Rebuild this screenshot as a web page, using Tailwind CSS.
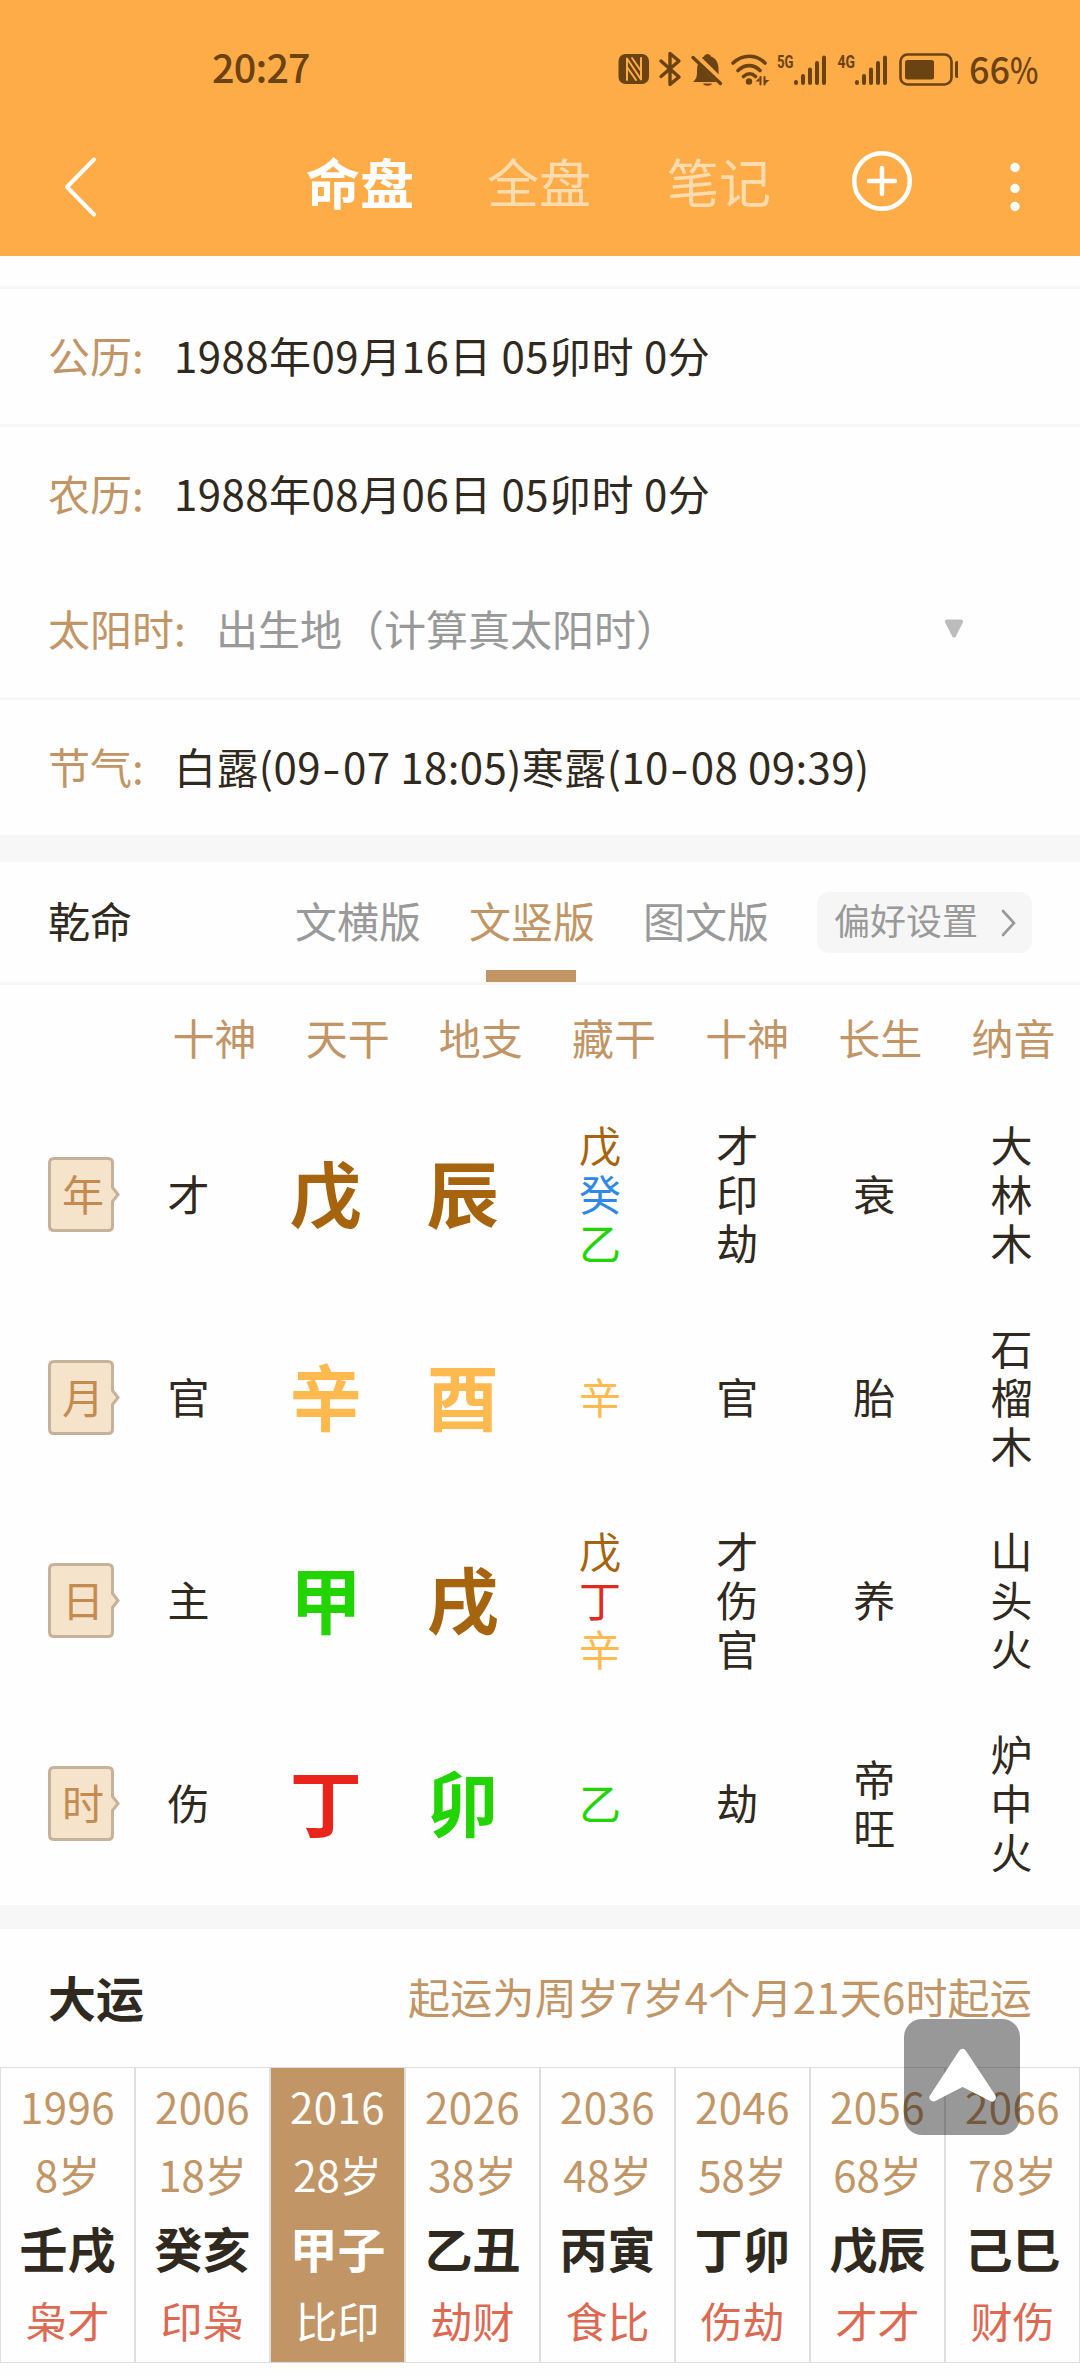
<!DOCTYPE html>
<html lang="zh-CN">
<head>
<meta charset="utf-8">
<title>命盘</title>
<script src="https://cdn.jsdelivr.net/npm/@tailwindcss/browser@4"></script>
</head>
<body class="relative w-[1080px] h-[2376px] overflow-hidden bg-[#fefefe] text-[42px] text-[#302920] whitespace-nowrap font-['Noto_Sans_CJK_SC',sans-serif]">

<header class="h-[256px] bg-[#feac48]">
  <!-- status bar -->
  <div class="flex items-center h-[112px] pt-[25px] pl-[212px] text-[#6b4312]">
    <span class="w-[406px] shrink-0 pb-[5px] text-[39.500px] leading-none font-medium tracking-[-0.8px]">20:27</span>
    <svg class="w-[340px] h-[40px] shrink-0" viewBox="618 48 340 40" fill="none" stroke="currentColor" stroke-linecap="round" stroke-linejoin="round">
      <rect x="618.500" y="53" width="30.500" height="30" rx="7" fill="currentColor" stroke="none"/>
      <path d="M627 79V57.500L641 78.500V57M627 66l9 13M632 57l9 13" stroke="#feac48" stroke-width="2"/>
      <path d="M661 60l18 16-9 7.500V52.500l9 7.500-18 15.500" stroke-width="3.400"/>
      <path d="M693 81c3-2.500 4-5 4-10 0-8 2-13 7-15.500 1-3.500 6-3.500 7 0 6 2 8 8 7.500 15.500 0 5 1.500 7.500 3.500 10zM703 82.500h9c-1 3-8 3-9 0z" fill="currentColor" stroke="none"/>
      <path d="M694.500 54.500l28 27.500" stroke="#feac48" stroke-width="7" stroke-linecap="butt"/>
      <path d="M693 56.500l27.500 26" stroke-width="3.400"/>
      <path d="M733 62c10-9 23-9 32 0M738 69.500c7-6.500 15.500-6.500 22 0M743.500 75.500c4-3.500 8.500-3.500 12 0" stroke-width="3.600"/>
      <circle cx="749" cy="80.500" r="3.200" fill="currentColor" stroke="none"/>
      <path d="M760.500 76v7.500M764.500 76v7.500" stroke-width="2"/>
      <path d="M755.500 80.500l4-4v4zM769.500 79l-4.500 4v-4z" fill="currentColor" stroke="none"/>
      <path d="M796 81v1M803 75v7M810 68.500V82M817 62v20M824 56.500V82M857 81v1M864 75v7M871 68.500V82M878 62v20M885 56.500V82" stroke-width="4"/>
      <rect x="900.500" y="53.500" width="51" height="30" rx="7" stroke-width="2.600"/>
      <rect x="905" y="59" width="29" height="19.500" rx="2.500" fill="currentColor" stroke="none"/>
      <path d="M957 62v13" stroke-width="4"/>
      <g fill="currentColor" stroke="none" font-family="Roboto" font-weight="700" font-size="18"><text x="777" y="66.500" textLength="16.500" lengthAdjust="spacingAndGlyphs">5G</text><text x="837.500" y="66.500" textLength="17.500" lengthAdjust="spacingAndGlyphs">4G</text></g>
    </svg>
    <span class="ml-[11px] shrink-0 text-[36px] leading-none pb-[2px] font-medium">66<span class="inline-block w-[28px] origin-left scale-x-[0.84]">%</span></span>
  </div>
  <!-- title bar -->
  <div class="flex h-[144px] pl-[63px]">
    <svg class="w-[36px] h-[66px] mt-[42px] shrink-0" viewBox="63 154 36 66" fill="none" stroke="#fff" stroke-width="4" stroke-linecap="round" stroke-linejoin="round"><path d="M94 159.500L67 187l27 27.500"/></svg>
    <nav class="flex h-[144px] items-center ml-[207px] pb-[6px] text-[52px] text-[#fedcae]">
      <span class="w-[181px] text-[54px] font-bold text-white">命盘</span>
      <span class="w-[180px]">全盘</span>
      <span class="w-[183px]">笔记</span>
    </nav>
    <svg class="w-[64px] h-[64px] mt-[37px] shrink-0" viewBox="850 149 64 64" fill="none" stroke="#fff" stroke-width="4.500" stroke-linecap="round"><circle cx="882" cy="181" r="27.800"/><path d="M869 181h26M882 168v26"/></svg>
    <svg class="w-[12px] h-[56px] ml-[95px] mt-[48px] shrink-0" viewBox="1009 160 12 56" fill="#fff"><circle cx="1015" cy="167.500" r="4.700"/><circle cx="1015" cy="188.500" r="4.700"/><circle cx="1015" cy="206.500" r="4.700"/></svg>
  </div>
</header>

<!-- birth details -->
<section class="pt-[30px] *:flex *:items-center *:px-12 *:pb-[4px]">
  <div class="h-[138px] border-t-3 border-[#f7f7f7]"><span class="w-[126px] text-[#c19565]">公历:</span><span class="tracking-[0.47px]">1988年09月16日 05卯时 0分</span></div>
  <div class="h-[138px] border-t-3 border-[#f7f7f7]"><span class="w-[126px] text-[#c19565]">农历:</span><span class="tracking-[0.47px]">1988年08月06日 05卯时 0分</span></div>
  <div class="h-[135px]"><span class="w-[168px] text-[#c19565]">太阳时:</span><span class="w-[727px] text-[#999]">出生地（计算真太阳时）</span>
    <svg class="w-[22px] h-[20px] mt-[3px]" viewBox="0 0 22 20"><path d="M4 2.500h14L11 16.500z" fill="#bcbcbc" stroke="#bcbcbc" stroke-width="4" stroke-linejoin="round"/></svg>
  </div>
  <div class="h-[138px] border-t-3 border-[#f7f7f7]"><span class="w-[126px] text-[#c19565]">节气:</span><span class="tracking-[0.42px]">白露(09<span class="inline-block mx-[3.500px] scale-x-[1.250]">-</span>07 18:05)寒露(10<span class="inline-block mx-[3.500px] scale-x-[1.250]">-</span>08 09:39)</span></div>
</section>

<div class="h-[27px] bg-[#f7f7f7]"></div>

<!-- chart tabs -->
<section class="flex h-[123px] pl-12 pr-12 border-b-3 border-[#f7f7f7] leading-[116px]">
  <span class="w-[247px]">乾命</span>
  <nav class="flex gap-12 text-[#999]">
    <span>文横版</span>
    <span class="relative text-[#c19565]">文竖版<i class="absolute bottom-0 left-[17px] w-[90px] h-[12px] bg-[#c19565]"></i></span>
    <span>图文版</span>
  </nav>
  <div class="flex items-center w-[215px] h-[61px] ml-auto mt-[30px] pl-[17px] rounded-xl bg-[#f6f6f6] text-[36px] leading-[55px] text-[#999]"><span class="w-[166px] h-[61px]">偏好设置</span>
    <svg class="w-[18px] h-[32px]" viewBox="0 0 18 32" fill="none" stroke="#999" stroke-width="2.600" stroke-linecap="round"><path d="M3 4l11 12L3 28"/></svg>
  </div>
</section>

<!-- four pillars -->
<section class="h-[920px]">
  <div class="grid grid-cols-7 h-[108px] pl-[148px] text-center leading-[104px] text-[#c19565]">
    <span>十神</span><span>天干</span><span>地支</span><span>藏干</span><span>十神</span><span>长生</span><span>纳音</span>
  </div>

  <div class="flex items-center h-[203px] pl-12 leading-[49px]">
    <div class="relative w-[72px] h-[75px] shrink-0"><svg class="absolute inset-0" viewBox="0 0 72 75" fill="#f5e3cb" stroke="#c6b298" stroke-width="3"><path d="M6 1.500H60Q64.500 1.500 64.500 6V30.500L70 37.500 64.500 44.500V69Q64.500 73.500 60 73.500H6Q1.500 73.500 1.500 69V6Q1.500 1.500 6 1.500Z"/></svg><span class="absolute left-[14px] top-0 leading-[71px] text-[#c38b50]">年</span></div>
    <div class="grid grid-cols-7 w-[960px] pb-[4px] items-center text-center *:flex *:flex-col">
      <div>才</div><div class="text-[72px] leading-[96px] pb-[4px] font-bold text-[#a6640e]">戊</div><div class="text-[72px] leading-[96px] pb-[4px] font-bold text-[#a6640e]">辰</div>
      <div><span class="text-[#a6640e]">戊</span><span class="text-[#2f88e6]">癸</span><span class="text-[#22d402]">乙</span></div>
      <div><span>才</span><span>印</span><span>劫</span></div><div>衰</div><div><span>大</span><span>林</span><span>木</span></div>
    </div>
  </div>

  <div class="flex items-center h-[203px] pl-12 leading-[49px]">
    <div class="relative w-[72px] h-[75px] shrink-0"><svg class="absolute inset-0" viewBox="0 0 72 75" fill="#f5e3cb" stroke="#c6b298" stroke-width="3"><path d="M6 1.500H60Q64.500 1.500 64.500 6V30.500L70 37.500 64.500 44.500V69Q64.500 73.500 60 73.500H6Q1.500 73.500 1.500 69V6Q1.500 1.500 6 1.500Z"/></svg><span class="absolute left-[14px] top-0 leading-[71px] text-[#c38b50]">月</span></div>
    <div class="grid grid-cols-7 w-[960px] pb-[4px] items-center text-center *:flex *:flex-col">
      <div>官</div><div class="text-[72px] leading-[96px] pb-[4px] font-bold text-[#feb94f]">辛</div><div class="text-[72px] leading-[96px] pb-[4px] font-bold text-[#feb94f]">酉</div>
      <div class="text-[#feb94f]">辛</div>
      <div>官</div><div>胎</div><div><span>石</span><span>榴</span><span>木</span></div>
    </div>
  </div>

  <div class="flex items-center h-[203px] pl-12 leading-[49px]">
    <div class="relative w-[72px] h-[75px] shrink-0"><svg class="absolute inset-0" viewBox="0 0 72 75" fill="#f5e3cb" stroke="#c6b298" stroke-width="3"><path d="M6 1.500H60Q64.500 1.500 64.500 6V30.500L70 37.500 64.500 44.500V69Q64.500 73.500 60 73.500H6Q1.500 73.500 1.500 69V6Q1.500 1.500 6 1.500Z"/></svg><span class="absolute left-[14px] top-0 leading-[71px] text-[#c38b50]">日</span></div>
    <div class="grid grid-cols-7 w-[960px] pb-[4px] items-center text-center *:flex *:flex-col">
      <div>主</div><div class="text-[72px] leading-[96px] pb-[4px] font-bold text-[#22d402]">甲</div><div class="text-[72px] leading-[96px] pb-[4px] font-bold text-[#a6640e]">戌</div>
      <div><span class="text-[#a6640e]">戊</span><span class="text-[#e02a20]">丁</span><span class="text-[#feb94f]">辛</span></div>
      <div><span>才</span><span>伤</span><span>官</span></div><div>养</div><div><span>山</span><span>头</span><span>火</span></div>
    </div>
  </div>

  <div class="flex items-center h-[203px] pl-12 leading-[49px]">
    <div class="relative w-[72px] h-[75px] shrink-0"><svg class="absolute inset-0" viewBox="0 0 72 75" fill="#f5e3cb" stroke="#c6b298" stroke-width="3"><path d="M6 1.500H60Q64.500 1.500 64.500 6V30.500L70 37.500 64.500 44.500V69Q64.500 73.500 60 73.500H6Q1.500 73.500 1.500 69V6Q1.500 1.500 6 1.500Z"/></svg><span class="absolute left-[14px] top-0 leading-[71px] text-[#c38b50]">时</span></div>
    <div class="grid grid-cols-7 w-[960px] pb-[4px] items-center text-center *:flex *:flex-col">
      <div>伤</div><div class="text-[72px] leading-[96px] pb-[4px] font-bold text-[#e9241b]">丁</div><div class="text-[72px] leading-[96px] pb-[4px] font-bold text-[#22d402]">卯</div>
      <div class="text-[#22d402]">乙</div>
      <div>劫</div><div><span>帝</span><span>旺</span></div><div><span>炉</span><span>中</span><span>火</span></div>
    </div>
  </div>
</section>

<div class="h-[24px] bg-[#f7f7f7]"></div>

<!-- decade luck -->
<section>
  <div class="flex items-center justify-between h-[138px] px-12 pb-[5px]">
    <h2 class="text-[48px] font-bold">大运</h2>
    <span class="text-[#c19565] tracking-[0.2px]">起运为周岁7岁4个月21天6时起运</span>
  </div>
  <div class="grid grid-cols-8 h-[296px] text-center border-y border-[#dedede] text-[#c19565] leading-[68px] *:flex *:flex-col *:border-x *:border-[#dedede] *:pt-[4px]">
    <div><span class="tracking-[0.4px]">1996</span><span>8岁</span><b class="text-[48px] leading-[78px] text-[#302920]">壬戌</b><span class="text-[#dd6952]">枭才</span></div>
    <div><span class="tracking-[0.4px]">2006</span><span>18岁</span><b class="text-[48px] leading-[78px] text-[#302920]">癸亥</b><span class="text-[#dd6952]">印枭</span></div>
    <div class="bg-[#c19565] text-white"><span class="tracking-[0.4px]">2016</span><span>28岁</span><b class="text-[48px] leading-[78px]">甲子</b><span>比印</span></div>
    <div><span class="tracking-[0.4px]">2026</span><span>38岁</span><b class="text-[48px] leading-[78px] text-[#302920]">乙丑</b><span class="text-[#dd6952]">劫财</span></div>
    <div><span class="tracking-[0.4px]">2036</span><span>48岁</span><b class="text-[48px] leading-[78px] text-[#302920]">丙寅</b><span class="text-[#dd6952]">食比</span></div>
    <div><span class="tracking-[0.4px]">2046</span><span>58岁</span><b class="text-[48px] leading-[78px] text-[#302920]">丁卯</b><span class="text-[#dd6952]">伤劫</span></div>
    <div><span class="tracking-[0.4px]">2056</span><span>68岁</span><b class="text-[48px] leading-[78px] text-[#302920]">戊辰</b><span class="text-[#dd6952]">才才</span></div>
    <div><span class="tracking-[0.4px]">2066</span><span>78岁</span><b class="text-[48px] leading-[78px] text-[#302920]">己巳</b><span class="text-[#dd6952]">财伤</span></div>
  </div>
</section>

<!-- back to top -->
<button class="absolute left-[904px] top-[2019px] w-[116px] h-[116px] rounded-[18px] bg-black/40">
  <svg class="w-[116px] h-[116px]" viewBox="0 0 116 116"><path d="M58.500 34L29.500 78.500 58.500 63.500 88 78.500Z" fill="#fff" stroke="#fff" stroke-width="8" stroke-linejoin="round"/></svg>
</button>
</body>
</html>
